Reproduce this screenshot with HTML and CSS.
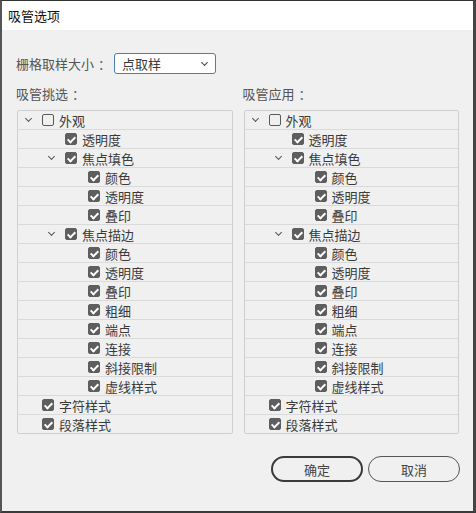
FILE: index.html
```html
<!DOCTYPE html>
<html lang="zh-CN">
<head>
  <meta charset="UTF-8" />
  <title>吸管选项</title>
  <link rel="stylesheet" href="styles.css">
</head>
<body>
  <div class="dialog">
    <div class="titlebar">吸管选项</div>

    <div class="content">
      <div class="sample-row">
        <span class="label">栅格取样大小<span class="colon">：</span></span>
        <div class="select">
          <span>点取样</span>
          <i class="caret"></i>
        </div>
      </div>

      <div class="columns">
        <!-- 吸管挑选 -->
        <div class="col">
          <div class="col-title">吸管挑选<span class="colon">：</span></div>
          <div class="tree">
            <div class="row l0"><i class="tw open"></i><i class="cb"></i>外观</div>
            <div class="row l1"><i class="tw"></i><i class="cb on"></i>透明度</div>
            <div class="row l1"><i class="tw open"></i><i class="cb on"></i>焦点填色</div>
            <div class="row l2"><i class="tw"></i><i class="cb on"></i>颜色</div>
            <div class="row l2"><i class="tw"></i><i class="cb on"></i>透明度</div>
            <div class="row l2"><i class="tw"></i><i class="cb on"></i>叠印</div>
            <div class="row l1"><i class="tw open"></i><i class="cb on"></i>焦点描边</div>
            <div class="row l2"><i class="tw"></i><i class="cb on"></i>颜色</div>
            <div class="row l2"><i class="tw"></i><i class="cb on"></i>透明度</div>
            <div class="row l2"><i class="tw"></i><i class="cb on"></i>叠印</div>
            <div class="row l2"><i class="tw"></i><i class="cb on"></i>粗细</div>
            <div class="row l2"><i class="tw"></i><i class="cb on"></i>端点</div>
            <div class="row l2"><i class="tw"></i><i class="cb on"></i>连接</div>
            <div class="row l2"><i class="tw"></i><i class="cb on"></i>斜接限制</div>
            <div class="row l2"><i class="tw"></i><i class="cb on"></i>虚线样式</div>
            <div class="row l0"><i class="tw"></i><i class="cb on"></i>字符样式</div>
            <div class="row l0"><i class="tw"></i><i class="cb on"></i>段落样式</div>
          </div>
        </div>

        <!-- 吸管应用 -->
        <div class="col">
          <div class="col-title">吸管应用<span class="colon">：</span></div>
          <div class="tree">
            <div class="row l0"><i class="tw open"></i><i class="cb"></i>外观</div>
            <div class="row l1"><i class="tw"></i><i class="cb on"></i>透明度</div>
            <div class="row l1"><i class="tw open"></i><i class="cb on"></i>焦点填色</div>
            <div class="row l2"><i class="tw"></i><i class="cb on"></i>颜色</div>
            <div class="row l2"><i class="tw"></i><i class="cb on"></i>透明度</div>
            <div class="row l2"><i class="tw"></i><i class="cb on"></i>叠印</div>
            <div class="row l1"><i class="tw open"></i><i class="cb on"></i>焦点描边</div>
            <div class="row l2"><i class="tw"></i><i class="cb on"></i>颜色</div>
            <div class="row l2"><i class="tw"></i><i class="cb on"></i>透明度</div>
            <div class="row l2"><i class="tw"></i><i class="cb on"></i>叠印</div>
            <div class="row l2"><i class="tw"></i><i class="cb on"></i>粗细</div>
            <div class="row l2"><i class="tw"></i><i class="cb on"></i>端点</div>
            <div class="row l2"><i class="tw"></i><i class="cb on"></i>连接</div>
            <div class="row l2"><i class="tw"></i><i class="cb on"></i>斜接限制</div>
            <div class="row l2"><i class="tw"></i><i class="cb on"></i>虚线样式</div>
            <div class="row l0"><i class="tw"></i><i class="cb on"></i>字符样式</div>
            <div class="row l0"><i class="tw"></i><i class="cb on"></i>段落样式</div>
          </div>
        </div>
      </div>

      <div class="buttons">
        <button class="btn primary">确定</button>
        <button class="btn">取消</button>
      </div>
    </div>
  </div>
</body>
</html>
```

FILE: styles.css
```css
html, body {
  margin: 0;
  padding: 0;
  height: 100%;
  overflow: hidden;
  background: #3a3a3a;
}

body {
  font-family: "Noto Sans CJK SC", "Noto Sans", sans-serif;
  font-size: 13px;
  color: #3a3a3a;
}

.dialog {
  box-sizing: border-box;
  width: 476px;
  height: 513px;
  background: #f0f0f0;
  border-top: 1px solid #333;
  border-left: 2px solid #555;
  border-right: 3px solid #444;
  border-bottom: 2px solid #3a3a3a;
}

.titlebar {
  height: 29px;
  line-height: 29px;
  padding-left: 6px;
  background: #fff;
  color: #111;
  font-size: 13px;
}

.content {
  padding: 23px 14px 0 15px;
}

.sample-row {
  display: flex;
  align-items: center;
  height: 21px;
}

.label {
  color: #555;
  margin-left: -1px;
}

.colon {
  padding-left: 4px;
  color: #666;
}

.select {
  box-sizing: border-box;
  display: flex;
  align-items: center;
  justify-content: space-between;
  width: 102px;
  height: 21px;
  margin-left: 3px;
  padding: 0 8px 0 7px;
  background: #fff;
  border: 1px solid #4a7fb3;
  border-radius: 3px;
  color: #3a3a3a;
}

.caret {
  width: 4px;
  height: 4px;
  margin-top: -3px;
  border: solid #444;
  border-width: 0 1.5px 1.5px 0;
  transform: rotate(45deg);
}

.columns {
  display: grid;
  grid-template-columns: 1fr 1fr;
  column-gap: 11px;
  margin-top: 11px;
}

.col-title {
  height: 25px;
  line-height: 17px;
  color: #555;
  margin-left: -1px;
}

.tree {
  border: 1px solid #cfcfcf;
  border-radius: 2px;
}

.row {
  display: flex;
  align-items: center;
  height: 18px;
  border-bottom: 1px solid #dadada;
  white-space: nowrap;
}

.row:last-child {
  border-bottom: none;
}

.l0 { padding-left: 6px; }
.l1 { padding-left: 29px; }
.l2 { padding-left: 52px; }

.tw {
  position: relative;
  flex: none;
  width: 18px;
  height: 18px;
}

.tw.open::before {
  content: "";
  position: absolute;
  left: 2px;
  top: 5px;
  width: 4px;
  height: 4px;
  border: solid #555;
  border-width: 0 1.5px 1.5px 0;
  transform: rotate(45deg);
}

.cb {
  position: relative;
  flex: none;
  box-sizing: border-box;
  width: 12px;
  height: 12px;
  margin-right: 5px;
  border: 1px solid #5a5a5a;
  border-radius: 2px;
}

.cb.on {
  background: #5e5e5e;
  border-color: #5e5e5e;
}

.cb.on::after {
  content: "";
  position: absolute;
  left: 3px;
  top: 0.5px;
  width: 3px;
  height: 6px;
  border: solid #fff;
  border-width: 0 2px 2px 0;
  transform: rotate(45deg);
}

.buttons {
  display: flex;
  justify-content: flex-end;
  gap: 5px;
  margin-top: 22px;
  margin-right: -1px;
}

.btn {
  box-sizing: border-box;
  width: 92px;
  height: 26px;
  border: 1px solid #555;
  border-radius: 13px;
  background: #f0f0f0;
  color: #444;
  font-family: inherit;
  font-size: 13px;
  padding: 0;
}

.btn.primary {
  border: 2px solid #3a3a3a;
}
```
